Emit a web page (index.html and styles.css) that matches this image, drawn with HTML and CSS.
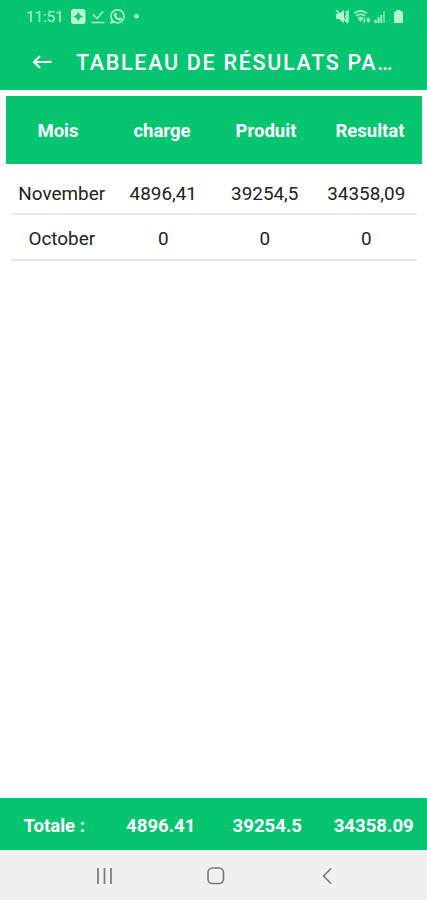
FILE: index.html
```html
<!DOCTYPE html>
<html lang="fr">
<head>
<meta charset="utf-8">
<title>Tableau</title>
<link rel="stylesheet" href="styles.css">
</head>
<body>
<div class="screen">
  <header class="top">
    <div class="status">
      <span class="time">11:51</span>
      <svg class="left-icons" width="72" height="18" viewBox="0 0 72 18">
        <path fill="currentColor" fill-rule="evenodd" d="M4.500 1h7.500a3 3 0 0 1 3.500 3.500v8a3 3 0 0 1-3.500 3.500H4.500A3 3 0 0 1 1 12.500v-8A3 3 0 0 1 4.500 1zM8.200 3.500Q7.300 7.600 3.300 8.500 7.300 9.400 8.200 13.500 9.100 9.400 13.100 8.500 9.100 7.600 8.200 3.500z"/>
        <path fill="none" stroke="currentColor" stroke-width="1.500" d="M23 6.500l4 4L33 3.500M21.500 14.500h13"/>
        <circle cx="47.500" cy="8.300" r="6.600" fill="none" stroke="currentColor" stroke-width="1.500"/>
        <path fill="currentColor" d="M41.500 10.500L40 15.800l5.500-1.500zM44.300 5.300l1.400-.8 1.300 2.300-.9 1.100q.8 1.800 2.600 2.500l1-1.100 2.200 1.100q0 2.100-2.200 2.200-5.300-.8-5.900-5.500z"/>
        <circle cx="66.500" cy="8.300" r="2.300" fill="currentColor"/>
      </svg>
      <svg class="right-icons" width="70" height="18" viewBox="0 0 70 18">
        <path fill="currentColor" d="M1 6h3l5-4v13l-5-4H1z"/>
        <path fill="none" stroke="currentColor" stroke-width="1.400" d="M1 2l12 13M10.500 3.500l2 2.500-2 2.500 2 2.500-2 2.500M13 2v12.500"/>
        <g fill="none" stroke="currentColor" stroke-width="1.600"><path d="M19 5.300q6.500-4.800 13 0M21 8q4.500-3.600 9 0M23.300 10.500q2.400-1.800 4.600 0"/></g>
        <path fill="currentColor" d="M23.500 11h4l-2 3zM28 11.500h3l-1.500-2.500zM28.500 10.500h1.500v4h-1.500zM32.500 9.500H34v5h-1.500zM31 11.500h4.500L33.300 15z"/>
        <path fill="currentColor" d="M39.500 12h2v3h-2zM42.500 9.500h2V15h-2zM45.500 7h1.600v8h-1.600z"/>
        <path fill="currentColor" opacity=".5" d="M48 3h2v12h-2z"/>
        <path fill="currentColor" d="M61.500 2h4v1.500h1.500q1 0 1 1v9.500q0 1-1 1h-7q-1 0-1-1V4.500q0-1 1-1h1.500z"/>
      </svg>
    </div>
    <div class="bar">
      <svg class="back" width="22" height="18" viewBox="0 0 22 18"><path fill="none" stroke="currentColor" stroke-width="2" d="M20.500 9H3M9 3L3 9l6 6"/></svg>
      <h1 class="title">TABLEAU DE RÉSULATS PA…</h1>
    </div>
  </header>
  <main class="content">
    <div class="row head"><span>Mois</span><span>charge</span><span>Produit</span><span>Resultat</span></div>
    <div class="row item first"><span>November</span><span>4896,41</span><span>39254,5</span><span>34358,09</span></div>
    <div class="row item"><span>October</span><span>0</span><span>0</span><span>0</span></div>
  </main>
  <div class="row total"><span>Totale :</span><span>4896.41</span><span>39254.5</span><span>34358.09</span></div>
  <nav class="nav">
    <svg width="18" height="20" viewBox="0 0 18 20"><path fill="none" stroke="currentColor" stroke-width="1.700" d="M3 2v16M9.500 2v16M16 2v16"/></svg>
    <svg width="20" height="20" viewBox="0 0 20 20"><rect x="1" y="2" width="15.500" height="15.500" rx="4.500" fill="none" stroke="currentColor" stroke-width="1.600"/></svg>
    <svg width="14" height="20" viewBox="0 0 14 20"><path fill="none" stroke="currentColor" stroke-width="1.600" d="M11 2.500L3.500 10l7.500 7.500"/></svg>
  </nav>
</div>
</body>
</html>
```
FILE: styles.css
```css
* { box-sizing: border-box; }
body { margin: 0; font-family: Roboto, sans-serif; background: #fff; }
.screen { width: 427px; height: 900px; display: flex; flex-direction: column; overflow: hidden; }
.top { height: 90px; background: #05c570; color: #fff; flex: none; }
.status { height: 34px; padding: 0 22px 0 26px; display: flex; align-items: center; color: #b9f3d4; }
.time { width: 44px; font-size: 15.5px; letter-spacing: -.2px; font-weight: 400; }
.right-icons { margin-left: auto; }
.bar { height: 56px; padding-left: 31px; display: flex; align-items: center; }
.back { margin-right: 23px; }
.title { margin: 0; padding-top: 2px; font-size: 21.5px; line-height: 28px; font-weight: 500; letter-spacing: 1.7px; white-space: nowrap; }
.content { flex: 1; padding-top: 6px; }
.row { display: grid; grid-template-columns: repeat(4, 1fr); align-items: center; text-align: center; white-space: nowrap; }
.head { height: 68px; margin: 0 5px 0 6px; padding-top: 2px; background: #05c570; color: #fff; font-size: 18.5px; font-weight: 700; }
.item { height: 46px; margin: 0 10px 0 11px; padding-top: 3px; border-bottom: 2px solid #e8e8e8; font-size: 18.9px; color: #222; }
.first { height: 51px; padding-top: 10px; }
.total { height: 52px; flex: none; padding: 3px 0 0 1px; background: #05c570; color: #fff; font-size: 18.6px; font-weight: 700; }
.nav { height: 50px; flex: none; padding: 2px 93px 0 95px; display: flex; align-items: center; justify-content: space-between; background: #f0f0f0; color: #777; }
```
